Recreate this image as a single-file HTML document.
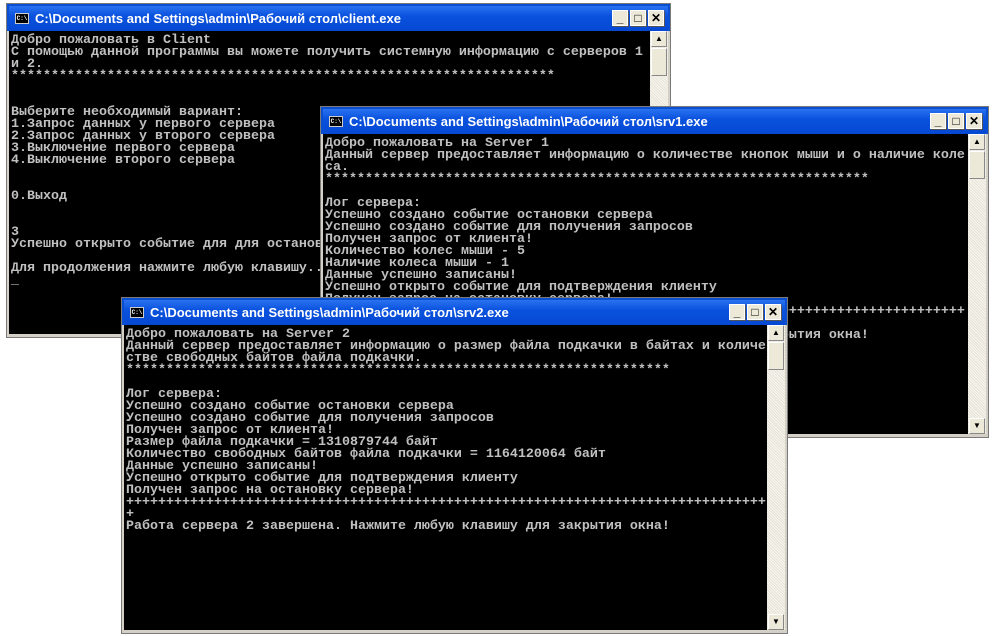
<!DOCTYPE html>
<html><head><meta charset="utf-8"><style>
body{margin:0;width:1004px;height:636px;background:#fff;position:relative;overflow:hidden;font-family:"Liberation Sans",sans-serif}
.w{position:absolute;background:#d4d0c8;border:1px solid #7a7a7a;box-sizing:border-box}
.t{position:absolute;left:0;right:0;top:0;height:25px;background:linear-gradient(#2a72f0,#0a52de 40%,#0548d2);color:#fff;font-weight:bold;font-size:13px;line-height:25px;padding-left:26px;white-space:nowrap;overflow:hidden;border-bottom:1px solid #4a80e0}
.ic{position:absolute;left:6px;top:7px;width:14px;height:11px;background:#000;border:1px solid #ccc;box-sizing:border-box;font-size:6px;line-height:9px;color:#fff;text-align:center;font-family:"Liberation Mono",monospace}
.b{position:absolute;top:4px;width:16px;height:16px;background:#ece9d8;border:1px solid #fff;box-sizing:border-box;color:#000;font-size:12px;line-height:14px;text-align:center;box-shadow:1px 1px 0 #555}
.c{position:absolute;left:2px;top:27px;bottom:3px;background:#000;overflow:hidden}
pre{margin:0;padding:4px 0 0 2px;font-family:"Liberation Mono",monospace;font-size:13.33px;line-height:12px;color:#c0c0c0;font-weight:bold;letter-spacing:0}
.s{position:absolute;top:27px;bottom:3px;width:18px;right:2px;background:#f1efe2;background-image:repeating-linear-gradient(45deg,#e6e3d6 0 1px,#f7f6ef 1px 2px)}
.ar{position:absolute;left:1px;width:16px;height:16px;background:#ece9d8;border:1px solid #fff;border-right-color:#888;border-bottom-color:#888;box-sizing:border-box;font-size:8px;line-height:14px;text-align:center}
.th{position:absolute;left:1px;top:17px;width:16px;height:28px;background:#ece9d8;border:1px solid #fff;border-right-color:#888;border-bottom-color:#888;box-sizing:border-box}
</style></head><body>

<div class="w" style="left:6px;top:3px;width:665px;height:335px">
<div class="t" style="border:2px solid #0a4fd0;border-bottom:none"><span class="ic">C:\</span>C:\Documents and Settings\admin\Рабочий стол\client.exe
<span class="b" style="right:40px">_</span><span class="b" style="right:22px">□</span><span class="b" style="right:4px;font-weight:bold">✕</span></div>
<div class="c" style="right:20px"><pre>Добро пожаловать в Client
С помощью данной программы вы можете получить системную информацию с серверов 1
и 2.
********************************************************************


Выберите необходимый вариант:
1.Запрос данных у первого сервера
2.Запрос данных у второго сервера
3.Выключение первого сервера
4.Выключение второго сервера


0.Выход


3
Успешно открыто событие для для остановки сервера

Для продолжения нажмите любую клавишу...
_</pre></div>
<div class="s"><div class="ar" style="top:0">▲</div><div class="th"></div></div>
</div>

<div class="w" style="left:320px;top:106px;width:669px;height:332px">
<div class="t" style="border:2px solid #0a4fd0;border-bottom:none"><span class="ic">C:\</span>C:\Documents and Settings\admin\Рабочий стол\srv1.exe
<span class="b" style="right:40px">_</span><span class="b" style="right:22px">□</span><span class="b" style="right:4px;font-weight:bold">✕</span></div>
<div class="c" style="right:20px"><pre>Добро пожаловать на Server 1
Данный сервер предоставляет информацию о количестве кнопок мыши и о наличие коле
са.
********************************************************************

Лог сервера:
Успешно создано событие остановки сервера
Успешно создано событие для получения запросов
Получен запрос от клиента!
Количество колес мыши - 5
Наличие колеса мыши - 1
Данные успешно записаны!
Успешно открыто событие для подтверждения клиенту
Получен запрос на остановку сервера!
++++++++++++++++++++++++++++++++++++++++++++++++++++++++++++++++++++++++++++++++
+
Работа сервера 1 завершена. Нажмите любую клавишу для закрытия окна!</pre></div>
<div class="s"><div class="ar" style="top:0">▲</div><div class="th"></div><div class="ar" style="bottom:0">▼</div></div>
</div>

<div class="w" style="left:121px;top:297px;width:667px;height:337px">
<div class="t" style="border:2px solid #0a4fd0;border-bottom:none"><span class="ic">C:\</span>C:\Documents and Settings\admin\Рабочий стол\srv2.exe
<span class="b" style="right:40px">_</span><span class="b" style="right:22px">□</span><span class="b" style="right:4px;font-weight:bold">✕</span></div>
<div class="c" style="right:20px"><pre>Добро пожаловать на Server 2
Данный сервер предоставляет информацию о размер файла подкачки в байтах и количе
стве свободных байтов файла подкачки.
********************************************************************

Лог сервера:
Успешно создано событие остановки сервера
Успешно создано событие для получения запросов
Получен запрос от клиента!
Размер файла подкачки = 1310879744 байт
Количество свободных байтов файла подкачки = 1164120064 байт
Данные успешно записаны!
Успешно открыто событие для подтверждения клиенту
Получен запрос на остановку сервера!
++++++++++++++++++++++++++++++++++++++++++++++++++++++++++++++++++++++++++++++++
+
Работа сервера 2 завершена. Нажмите любую клавишу для закрытия окна!</pre></div>
<div class="s"><div class="ar" style="top:0">▲</div><div class="th"></div><div class="ar" style="bottom:0">▼</div></div>
</div>

</body></html>
